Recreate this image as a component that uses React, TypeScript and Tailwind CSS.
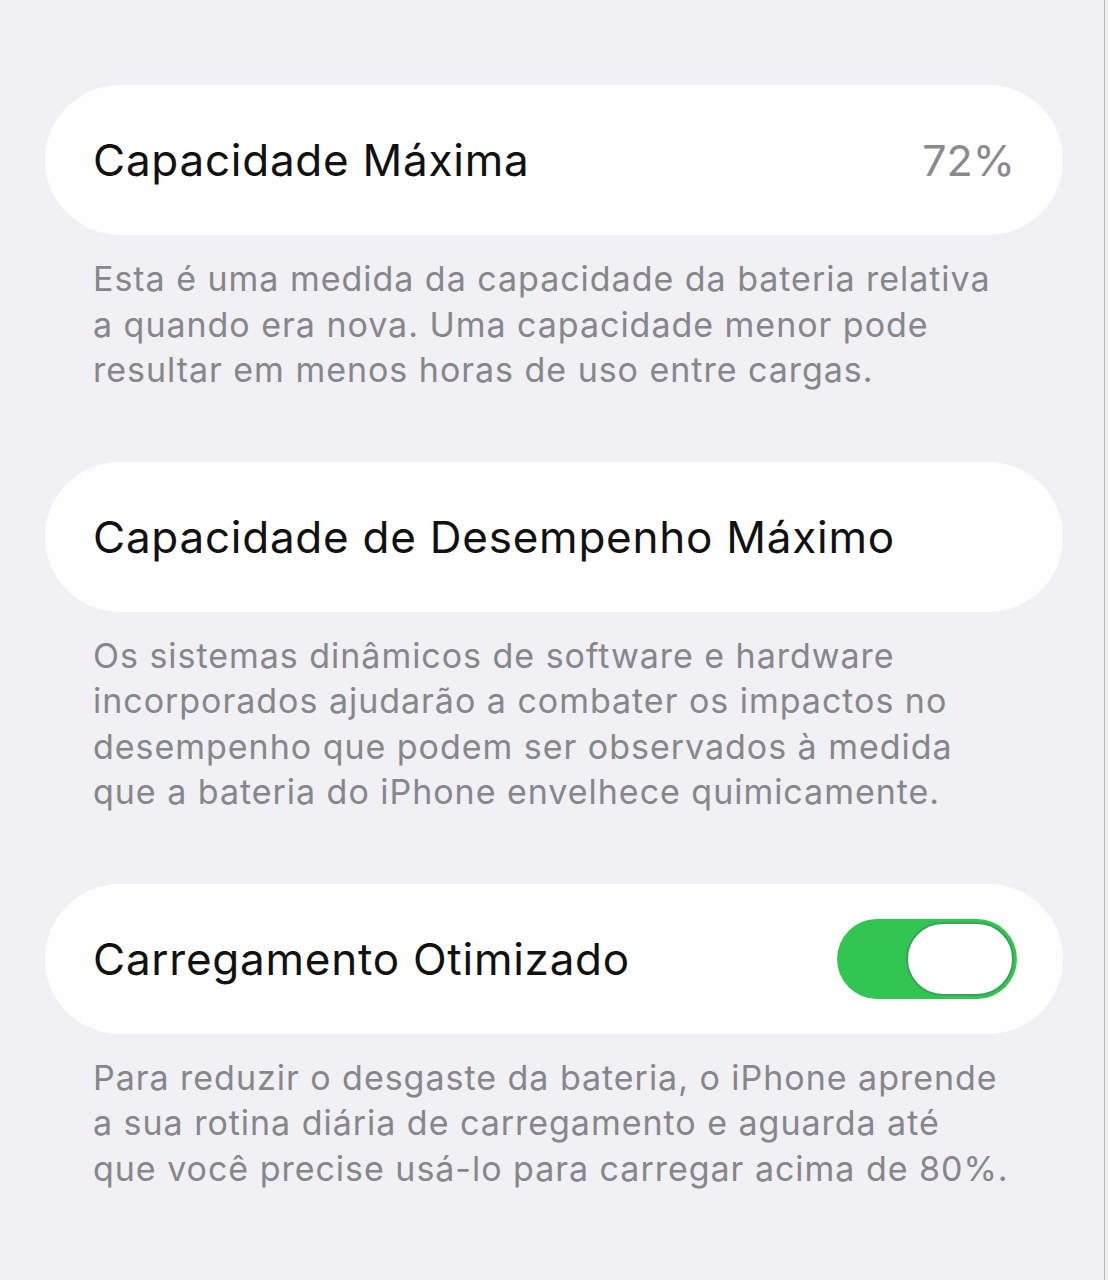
import React from "react";

function Card({ children }: { children: React.ReactNode }) {
  return (
    <div className="flex h-[150px] items-center justify-between rounded-[75px] bg-[#fefefe] pl-[48px] pr-[48px]">
      {children}
    </div>
  );
}

function Desc({ lines }: { lines: string[] }) {
  return (
    <div className="pl-[48px] pt-[21px] text-[34px] leading-[45.5px] tracking-[0.97px] text-[#86868b]">
      {lines.map((l, i) => (
        <div key={i} className="whitespace-nowrap">
          {l}
        </div>
      ))}
    </div>
  );
}

export default function App() {
  return (
    <div
      className="relative h-[1280px] w-[1108px] overflow-hidden bg-[#f1f0f5] pl-[45px] pr-[45px] pt-[85px]"
      style={{ fontFamily: "Inter, 'Noto Sans', sans-serif" }}
    >
      <div className="flex flex-col">
        <Card>
          <span className="text-[44px] tracking-[0.75px] text-[#111]">Capacidade Máxima</span>
          <span className="text-[43px] text-[#8a8a8e]">72%</span>
        </Card>
        <Desc
          lines={[
            "Esta é uma medida da capacidade da bateria relativa",
            "a quando era nova. Uma capacidade menor pode",
            "resultar em menos horas de uso entre cargas.",
          ]}
        />
        <div className="h-[69px]" />
        <Card>
          <span className="text-[44px] tracking-[0.75px] text-[#111]">Capacidade de Desempenho Máximo</span>
        </Card>
        <Desc
          lines={[
            "Os sistemas dinâmicos de software e hardware",
            "incorporados ajudarão a combater os impactos no",
            "desempenho que podem ser observados à medida",
            "que a bateria do iPhone envelhece quimicamente.",
          ]}
        />
        <div className="h-[69px]" />
        <Card>
          <span className="text-[44px] tracking-[0.75px] text-[#111]">Carregamento Otimizado</span>
          <div className="relative -mr-[2px] h-[80px] w-[180px] rounded-full bg-[#31c552]">
            <div className="absolute right-[3px] top-[3px] h-[74px] w-[108px] rounded-full border-[2px] border-[#3aa35a] bg-white" />
          </div>
        </Card>
        <Desc
          lines={[
            "Para reduzir o desgaste da bateria, o iPhone aprende",
            "a sua rotina diária de carregamento e aguarda até",
            "que você precise usá-lo para carregar acima de 80%.",
          ]}
        />
      </div>
      <div className="absolute right-[3px] top-0 h-full w-[1px] bg-[#b8b8bc]" />
    </div>
  );
}
